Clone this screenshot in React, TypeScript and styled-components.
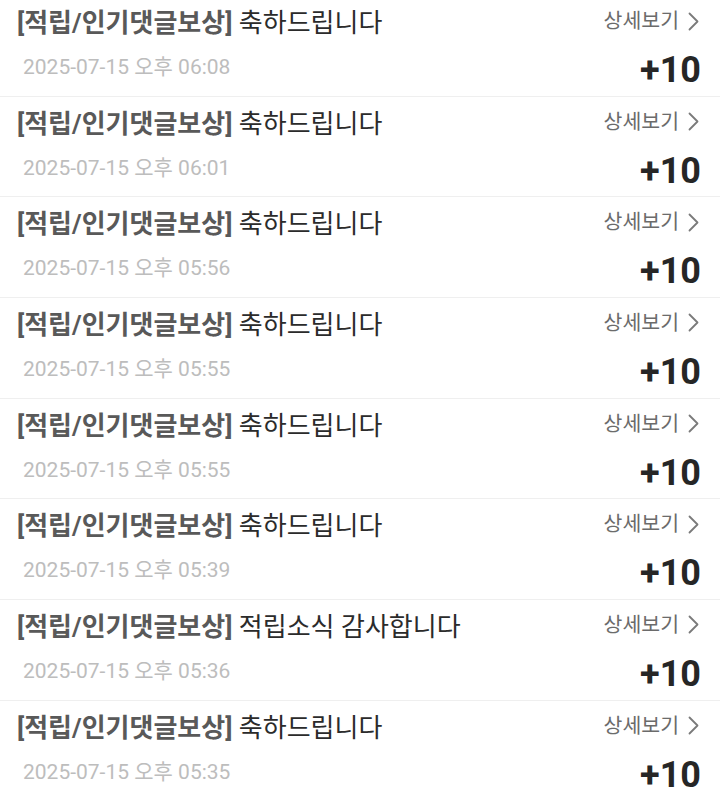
import React from "react";
import styled, { createGlobalStyle } from "styled-components";

const GlobalStyle = createGlobalStyle`
  html, body {
    margin: 0;
    padding: 0;
    background: #ffffff;
    overflow: hidden;
  }
  body {
    font-family: Roboto, "Noto Sans CJK KR", sans-serif;
  }
`;

type Reward = {
  id: number;
  message: string;
  date: string;
  time: string;
  point: number;
};

const REWARDS: Reward[] = [
  { id: 1, message: "축하드립니다", date: "2025-07-15", time: "06:08", point: 10 },
  { id: 2, message: "축하드립니다", date: "2025-07-15", time: "06:01", point: 10 },
  { id: 3, message: "축하드립니다", date: "2025-07-15", time: "05:56", point: 10 },
  { id: 4, message: "축하드립니다", date: "2025-07-15", time: "05:55", point: 10 },
  { id: 5, message: "축하드립니다", date: "2025-07-15", time: "05:55", point: 10 },
  { id: 6, message: "축하드립니다", date: "2025-07-15", time: "05:39", point: 10 },
  { id: 7, message: "적립소식 감사합니다", date: "2025-07-15", time: "05:36", point: 10 },
  { id: 8, message: "축하드립니다", date: "2025-07-15", time: "05:35", point: 10 },
];

const List = styled.ul`
  list-style: none;
  margin: -4px 0 0;
  padding: 0;
`;

const Row = styled.li`
  box-sizing: border-box;
  height: 100.67px;
  padding: 0 19px 0 17px;
  display: flex;
  justify-content: space-between;
  border-bottom: 1.5px solid #efefef;
`;

const Left = styled.div`
  display: flex;
  flex-direction: column;
  padding-top: 10px;
`;

const Right = styled.div`
  display: flex;
  flex-direction: column;
  align-items: flex-end;
  padding-top: 10px;
`;

const Title = styled.div`
  font-size: 26px;
  line-height: 34px;
  color: #2b2b2b;
  white-space: nowrap;
`;

const Tag = styled.span`
  font-weight: 700;
  color: #595959;
`;

const DateText = styled.div`
  margin-top: 13px;
  padding-left: 6px;
  font-size: 21px;
  line-height: 28px;
  color: #bdbdbd;
  white-space: nowrap;
`;

const DetailLink = styled.a`
  display: flex;
  align-items: center;
  gap: 9px;
  margin-right: 2px;
  font-size: 20.5px;
  line-height: 30px;
  color: #6b6b6b;
  text-decoration: none;
  cursor: pointer;
`;

const Point = styled.div`
  margin-top: 14px;
  font-size: 36px;
  font-weight: 700;
  line-height: 40px;
  color: #262626;
`;

const Chevron = () => (
  <svg width="11" height="19" viewBox="0 0 11 19" fill="none">
    <path d="M1.5 1.5 L9.5 9.5 L1.5 17.5" stroke="#7a7a7a" strokeWidth="1.8" strokeLinecap="round" strokeLinejoin="round" />
  </svg>
);

const RewardRow: React.FC<{ item: Reward }> = ({ item }) => (
  <Row>
    <Left>
      <Title>
        <Tag>[적립/인기댓글보상]</Tag> {item.message}
      </Title>
      <DateText>
        {item.date} 오후 {item.time}
      </DateText>
    </Left>
    <Right>
      <DetailLink>
        상세보기
        <Chevron />
      </DetailLink>
      <Point>+{item.point}</Point>
    </Right>
  </Row>
);

const App: React.FC = () => {
  return (
    <>
      <GlobalStyle />
      <List>
        {REWARDS.map((item) => (
          <RewardRow key={item.id} item={item} />
        ))}
      </List>
    </>
  );
};

export default App;
